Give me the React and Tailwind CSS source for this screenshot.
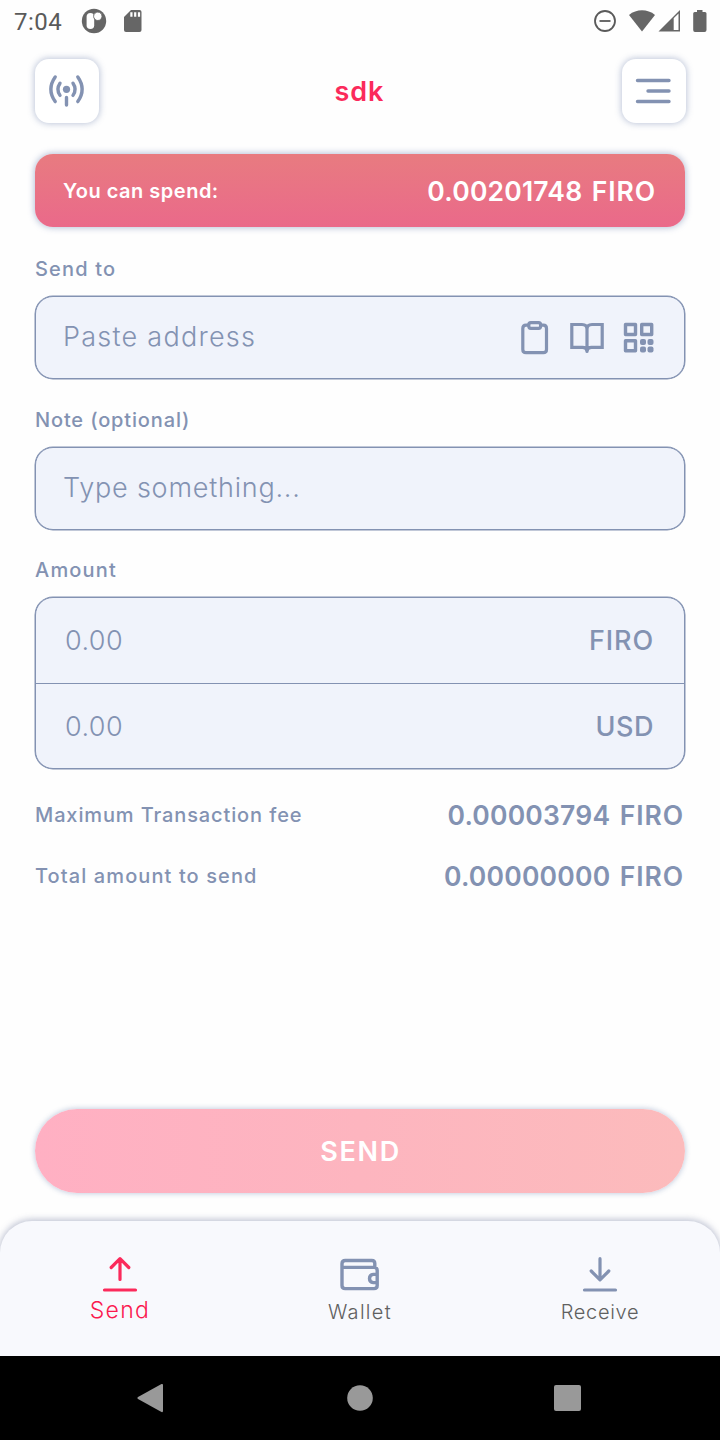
import React from "react";

function StatusBar() {
  return (
    <header className="flex h-[42px] items-center justify-between pl-[14px] pr-[12px] text-[#666666]">
      <div className="flex items-center">
        <span className="w-[67px] pt-px font-[Roboto] text-[24px] leading-[42px] tracking-[0.5px] text-[#5a5a5a]">7:04</span>
        <svg width="26" height="26" viewBox="0 0 26 26" className="shrink-0">
          <circle cx="13" cy="13" r="12.2" fill="#666666" />
          <rect x="5.6" y="5" width="7.6" height="16" rx="3.8" fill="white" />
          <circle cx="16.8" cy="8.3" r="4.2" fill="white" stroke="#666666" strokeWidth="0.9" />
        </svg>
        <svg width="20" height="24" viewBox="0 0 20 24" className="ml-4 shrink-0">
          <path d="M8 1H16.5Q18.5 1 18.5 3V21Q18.5 23 16.5 23H3Q1 23 1 21V8Z" fill="#666666" />
          <path d="M8.4 3.3V7.8M12.2 3.3V7.8M16 3.3V7.8" stroke="white" strokeWidth="2.2" />
        </svg>
      </div>
      <div className="flex items-center">
        <svg width="24" height="24" viewBox="0 0 24 24">
          <circle cx="12" cy="12" r="10" fill="none" stroke="#5a5a5a" strokeWidth="1.8" />
          <path d="M6.5 12H17.5" stroke="#5a5a5a" strokeWidth="1.8" />
        </svg>
        <svg width="28" height="24" viewBox="0 0 28 24" className="ml-[11px]">
          <path d="M1 6C8.5-.2 19.5-.2 27 6L14 22.5Z" fill="#666666" />
        </svg>
        <svg width="23" height="24" viewBox="0 0 23 24" className="ml-[2px]">
          <path d="M.5 22.5L22 1V22.5Z" fill="#666666" />
          <path d="M15.7 9.2L20.5 4.4V21H15.7Z" fill="white" />
        </svg>
        <svg width="16" height="24" viewBox="0 0 16 24" className="ml-[11px]">
          <path d="M5 1H10.5V3H13Q14.5 3 14.5 4.5V21Q14.5 23 12.5 23H3Q1.2 23 1.2 21V4.5Q1.2 3 2.7 3H5Z" fill="#666666" />
        </svg>
      </div>
    </header>
  );
}

function IconButton({ label, children }) {
  return (
    <button aria-label={label} className="h-[64px] w-[64px] rounded-[14px] bg-white shadow-[0_0_6px_1px_rgba(90,110,160,0.38)]">
      <svg width="64" height="64" viewBox="0 0 64 64" fill="none" stroke="#8392b2" strokeWidth="3.4" strokeLinecap="round">
        {children}
      </svg>
    </button>
  );
}

function Label({ children }) {
  return <p className="h-[27px] text-[20px] leading-[27px] font-[450] text-[#8392b2]">{children}</p>;
}

function Amount({ value }) {
  return (
    <span className="flex gap-[9.5px] pt-[2px] pr-px text-[26.5px] font-semibold">
      <span className="tracking-[0.2px]">{value}</span>
      <span className="tracking-[0.9px]">FIRO</span>
    </span>
  );
}

function FieldIcons() {
  return (
    <div className="flex items-center text-[#8392b2]">
      <svg width="30" height="36" viewBox="0 0 30 36" fill="none" stroke="currentColor" strokeWidth="3.2" strokeLinejoin="round">
        <path d="M9 5.2H6Q2.8 5.2 2.8 8.4V29.5Q2.8 32.7 6 32.7H23.3Q26.5 32.7 26.5 29.5V8.4Q26.5 5.2 23.3 5.2H20.5" />
        <rect x="8.8" y="2.7" width="11.8" height="5.6" rx="2" />
      </svg>
      <svg width="36" height="36" viewBox="0 0 36 36" fill="none" stroke="currentColor" strokeWidth="3.2" className="ml-[19px]">
        <path d="M18 28.3V9.3Q18 4.5 13 4.5H2.8V27.3H13.5Q17.2 27.3 18 30.5Q18.8 27.3 22.5 27.3H33.2V4.5H23Q18 4.5 18 9.3" />
        <path d="M18 29V31.5" strokeLinecap="round" />
      </svg>
      <svg width="32" height="32" viewBox="0 0 32 32" fill="none" stroke="currentColor" strokeWidth="3.4" strokeLinejoin="round" className="ml-[18px]">
        <rect x="2.5" y="2.5" width="10" height="10" />
        <rect x="18.7" y="2.5" width="10" height="10" />
        <rect x="2.5" y="18.7" width="10" height="10" />
        <g fill="currentColor" stroke="none">
          <rect x="17" y="17" width="6" height="6" rx="2" />
          <rect x="24.5" y="17" width="6" height="6" rx="2" />
          <rect x="17" y="24.4" width="6" height="6" rx="2" />
          <rect x="24.5" y="24.4" width="6" height="6" rx="2" />
        </g>
      </svg>
    </div>
  );
}

function BottomNav() {
  return (
    <nav className="grid h-[135px] grid-cols-3 rounded-t-[32px] bg-[#f8f9fd] shadow-[0_-1px_6px_1px_rgba(90,100,140,0.36)]">
      <div className="flex flex-col items-center pt-[34px]">
        <svg width="40" height="40" viewBox="0 0 40 40" fill="none" stroke="#fb2a5b" strokeWidth="3.2" strokeLinecap="round" strokeLinejoin="round">
          <path d="M20 24.5V4M11.2 12.5L20 3.7L28.8 12.5M4.5 35H35.5" />
        </svg>
        <span className="h-[30px] text-[23px] leading-[30px] font-[350] tracking-[1.3px] text-[#fb1a4f]">Send</span>
      </div>
      <div className="flex flex-col items-center pt-[34px]">
        <svg width="42" height="40" viewBox="0 0 42 40" fill="none" stroke="#8392b2" strokeWidth="3.4" strokeLinejoin="round">
          <path d="M35.8 12.4V8.5Q35.8 5.5 32.8 5.5H6.2Q3 5.5 3 8.7V30.5Q3 33.6 6.2 33.6H35Q38.2 33.6 38.2 30.5V15.5Q38.2 12.4 35 12.4H3" />
          <path d="M38.2 19.4H34.3Q30.5 19.8 30.5 23.5Q30.5 27.2 34.3 27.6H38.2" />
        </svg>
        <span className="h-[34px] text-[20px] leading-[34px] font-light tracking-[1.3px] text-[#606060]">Wallet</span>
      </div>
      <div className="flex flex-col items-center pt-[34px]">
        <svg width="40" height="40" viewBox="0 0 40 40" fill="none" stroke="#8392b2" strokeWidth="3.2" strokeLinecap="round" strokeLinejoin="round">
          <path d="M20 3.7V24M11.2 16L20 24.8L28.8 16M4.5 35H35.5" />
        </svg>
        <span className="h-[34px] text-[20px] leading-[34px] font-light tracking-[0.7px] text-[#606060]">Receive</span>
      </div>
    </nav>
  );
}

export default function App() {
  return (
    <div className="flex h-[1440px] w-[720px] flex-col overflow-hidden bg-[#fefefe] font-['Inter','Liberation_Sans',sans-serif]">
      <StatusBar />
      <div className="flex h-[81px] items-start justify-between pr-[34px] pl-[35px] pt-[17px]">
        <IconButton label="Network">
          <circle cx="31.5" cy="30.3" r="3.6" fill="#8392b2" stroke="none" />
          <path d="M31.5 38.5V46M25 24.2Q20.8 30.3 25 36.4M38 24.2Q42.2 30.3 38 36.4M20.2 18Q11.5 30.3 20.2 42.6M42.8 18Q51.5 30.3 42.8 42.6" />
        </IconButton>
        <h1 className="pr-[2px] text-[27px] leading-[66px] font-semibold tracking-[0.9px] text-[#fb2a5b]">sdk</h1>
        <IconButton label="Menu">
          <path d="M15.5 21.5H47M26 32H47M15.5 42.5H47" />
        </IconButton>
      </div>

      <main className="flex flex-1 flex-col px-[35px] pt-[31px]">
        <section className="flex h-[73px] items-center justify-between rounded-[18px] bg-linear-to-b from-[#e87b80] to-[#ea698a] pr-[28px] pl-[28px] text-white shadow-[0_0_6px_1px_rgba(80,105,160,0.4)]">
          <span className="text-[20px] font-semibold tracking-[0.5px]">You can spend:</span>
          <Amount value="0.00201748" />
        </section>

        <div className="mt-[29px]"><Label><span className="tracking-[1.15px]">Send to</span></Label></div>
        <div className="mt-[13px] flex h-[83px] items-center justify-between rounded-[18px] border border-[#8392b2] bg-[#f0f3fb] pr-[29px] pl-[27px] shadow-[0_0_0_0.5px_#8392b2]">
          <span className="pb-px text-[27px] leading-[40px] font-[350] tracking-[1.25px] text-[#8392b2]">Paste address</span>
          <FieldIcons />
        </div>

        <div className="mt-[28px]"><Label><span className="tracking-[0.85px]">Note (optional)</span></Label></div>
        <div className="mt-[13px] flex h-[83px] items-center rounded-[18px] border border-[#8392b2] bg-[#f0f3fb] pl-[27px] shadow-[0_0_0_0.5px_#8392b2]">
          <span className="pb-px text-[27px] leading-[40px] font-[350] tracking-[0.78px] text-[#8392b2]">Type something...</span>
        </div>

        <div className="mt-[27px]"><Label><span className="tracking-[1.2px]">Amount</span></Label></div>
        <div className="mt-[13px] h-[172px] rounded-[18px] border border-[#8392b2] bg-[#f0f3fb] text-[27px] text-[#8392b2] shadow-[0_0_0_0.5px_#8392b2]">
          <div className="flex h-[86px] items-center justify-between border-b border-[#8392b2] pt-[2px] pr-[30px] pl-[29px]">
            <span className="font-[350] tracking-[0.45px]">0.00</span>
            <span className="font-medium tracking-[0.9px]">FIRO</span>
          </div>
          <div className="flex h-[85px] items-center justify-between pt-[2px] pr-[30px] pl-[29px]">
            <span className="font-[350] tracking-[0.45px]">0.00</span>
            <span className="font-medium tracking-[0.5px]">USD</span>
          </div>
        </div>

        <div className="mt-[26px] flex h-[40px] items-center justify-between text-[#8392b2]">
          <span className="text-[20px] font-[450] tracking-[0.88px]">Maximum Transaction fee</span>
          <Amount value="0.00003794" />
        </div>
        <div className="mt-[21px] flex h-[40px] items-center justify-between text-[#8392b2]">
          <span className="text-[20px] font-[450] tracking-[1.1px]">Total amount to send</span>
          <Amount value="0.00000000" />
        </div>

        <button className="mt-auto mb-[28px] h-[84px] rounded-full bg-linear-to-r from-[#ffb0c3] via-[#fdb5bf] to-[#fcbbbc] pt-[2px] pl-[1px] text-[27px] font-semibold tracking-[1.7px] text-white shadow-[0_0_5px_1px_rgba(80,105,160,0.3)]">
          SEND
        </button>
      </main>

      <BottomNav />

      <footer className="flex h-[84px] items-center bg-black pl-[137px]">
        <svg width="27" height="30" viewBox="0 0 27 30"><path d="M24.5 1Q26 .5 26 2V28Q26 29.5 24.5 29L1 16Q-.2 15 1 14Z" fill="#999999" /></svg>
        <svg width="26" height="26" viewBox="0 0 26 26" className="ml-[183px]"><circle cx="13" cy="13" r="12.8" fill="#999999" /></svg>
        <div className="ml-[181px] h-[26px] w-[27px] rounded-[2px] bg-[#999999]" />
      </footer>
    </div>
  );
}
